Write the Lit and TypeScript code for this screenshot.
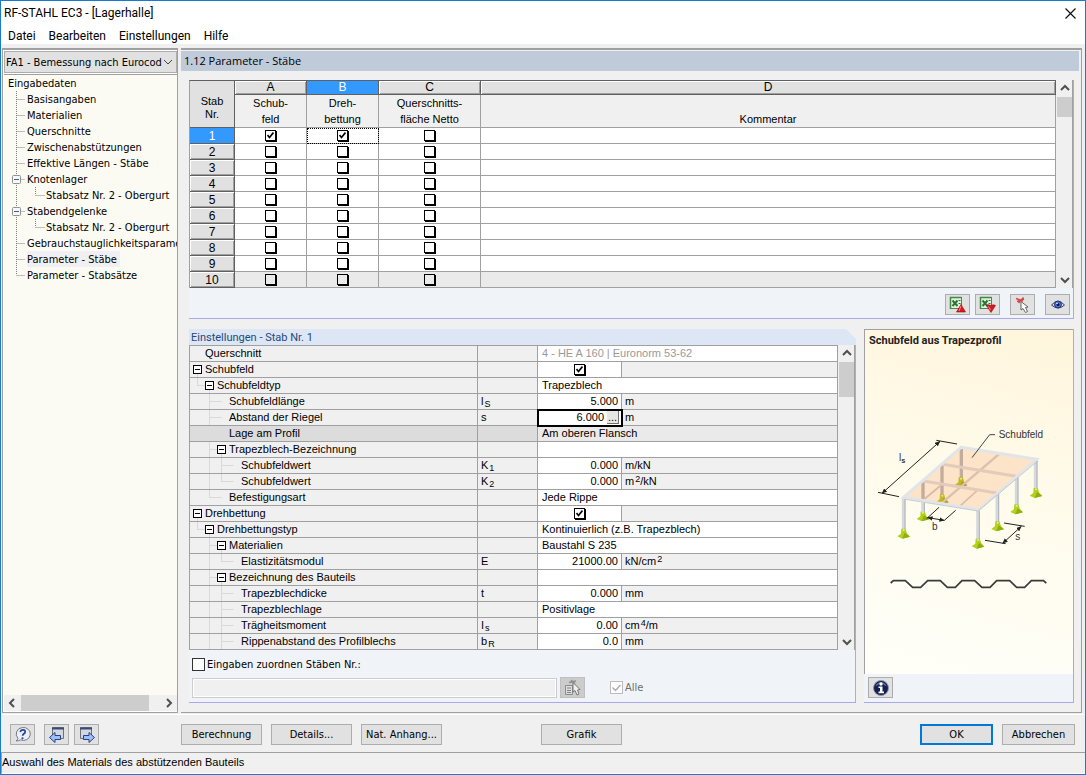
import { LitElement, html, svg, css, nothing, TemplateResult } from "lit";
import { customElement, state } from "lit/decorators.js";
import { classMap } from "lit/directives/class-map.js";

interface TreeItem {
  label: string;
  depth: number;
  open?: boolean;
  last?: boolean;
  selected?: boolean;
}

interface SettingRow {
  label: string;
  level: number;
  open?: boolean;
  last?: boolean;
  through?: boolean;
  symbol?: string;
  sub?: string;
  kind: "text" | "check" | "number" | "edit";
  value?: string;
  unit?: [string, string?, string?];
  muted?: boolean;
  selected?: boolean;
}

const TREE: TreeItem[] = [
  { label: "Eingabedaten", depth: 0 },
  { label: "Basisangaben", depth: 1 },
  { label: "Materialien", depth: 1 },
  { label: "Querschnitte", depth: 1 },
  { label: "Zwischenabstützungen", depth: 1 },
  { label: "Effektive Längen - Stäbe", depth: 1 },
  { label: "Knotenlager", depth: 1, open: true },
  { label: "Stabsatz Nr. 2 - Obergurt", depth: 2, last: true },
  { label: "Stabendgelenke", depth: 1, open: true },
  { label: "Stabsatz Nr. 2 - Obergurt", depth: 2, last: true },
  { label: "Gebrauchstauglichkeitsparameter", depth: 1 },
  { label: "Parameter - Stäbe", depth: 1, selected: true },
  { label: "Parameter - Stabsätze", depth: 1, last: true },
];

const SETTINGS: SettingRow[] = [
  { label: "Querschnitt", level: 0, kind: "text", value: "4 - HE A 160 | Euronorm 53-62", muted: true },
  { label: "Schubfeld", level: 0, open: true, kind: "check" },
  { label: "Schubfeldtyp", level: 1, open: true, last: true, kind: "text", value: "Trapezblech" },
  { label: "Schubfeldlänge", level: 2, symbol: "l", sub: "S", kind: "number", value: "5.000", unit: ["m"] },
  { label: "Abstand der Riegel", level: 2, symbol: "s", kind: "edit", value: "6.000", unit: ["m"] },
  { label: "Lage am Profil", level: 2, kind: "text", value: "Am oberen Flansch", selected: true },
  { label: "Trapezblech-Bezeichnung", level: 2, open: true, kind: "text", value: "" },
  { label: "Schubfeldwert", level: 3, through: true, symbol: "K", sub: "1", kind: "number", value: "0.000", unit: ["m/kN"] },
  { label: "Schubfeldwert", level: 3, through: true, last: true, symbol: "K", sub: "2", kind: "number", value: "0.000", unit: ["m", "2", "/kN"] },
  { label: "Befestigungsart", level: 2, last: true, kind: "text", value: "Jede Rippe" },
  { label: "Drehbettung", level: 0, open: true, kind: "check" },
  { label: "Drehbettungstyp", level: 1, open: true, last: true, kind: "text", value: "Kontinuierlich (z.B. Trapezblech)" },
  { label: "Materialien", level: 2, open: true, kind: "text", value: "Baustahl S 235" },
  { label: "Elastizitätsmodul", level: 3, through: true, last: true, symbol: "E", kind: "number", value: "21000.00", unit: ["kN/cm", "2"] },
  { label: "Bezeichnung des Bauteils", level: 2, open: true, kind: "text", value: "" },
  { label: "Trapezblechdicke", level: 3, through: true, symbol: "t", kind: "number", value: "0.000", unit: ["mm"] },
  { label: "Trapezblechlage", level: 3, through: true, kind: "text", value: "Positivlage" },
  { label: "Trägheitsmoment", level: 3, through: true, symbol: "I", sub: "s", kind: "number", value: "0.00", unit: ["cm", "4", "/m"] },
  { label: "Rippenabstand des Profilblechs", level: 3, through: true, symbol: "b", sub: "R", kind: "number", value: "0.0", unit: ["mm"] },
];

const chevron = (dir: "up" | "down" | "left" | "right") => {
  const d = { up: "M1 6 5 2 9 6", down: "M1 3 5 7 9 3", left: "M7 1 3 5 7 9", right: "M3 1 7 5 3 9" }[dir];
  return html`<svg width="10" height="10" viewBox="0 0 10 10" aria-hidden="true"><path d=${d} fill="none" stroke="#505050" stroke-width="2"/></svg>`;
};

const tick = html`<svg class="tick" width="7" height="7" viewBox="0 0 7 7" aria-hidden="true"><path d="M0.500 3 2.500 5.500 6.500 0.500" fill="none" stroke="#000" stroke-width="1.700"/></svg>`;

const excel = (up: boolean) => html`<svg width="18" height="18" viewBox="0 0 18 18" aria-hidden="true">
  <rect x="1.500" y="1.500" width="11" height="11" fill="#e4f0e2" stroke="#5d7d60"/>
  <path d="M1.500 13V1.500h11" fill="none" stroke="#3f8a44" stroke-width="1.500"/>
  <path d="M3.500 4.500 8.500 10M8.500 4.500 3.500 10" stroke="#2b7431" stroke-width="2"/>
  <path d="M9.500 4.500h2M9.500 7.500h2" stroke="#2b7431"/>
  ${up
    ? svg`<path d="M12 8.500 16.500 16H7.500z" fill="#d8191f" stroke="#8e0b10" stroke-width=".6"/><path d="M12 10 10 15" stroke="#ff8c86"/>`
    : svg`<path d="M7.500 9.500q2-1.500 4.500 0 2.500-1.500 4.500 0L12 16.500z" fill="#d8191f" stroke="#8e0b10" stroke-width=".6"/><path d="M9.500 10.500 11.500 14" stroke="#ff8c86"/>`}
</svg>`;

const pickIcon = html`<svg width="18" height="18" viewBox="0 0 18 18" aria-hidden="true">
  <path d="M2 2.500 9 5M9.500 1.500 4.500 7M3 5.500 10 3" stroke="#d9464a" stroke-width="1.500"/>
  <path d="M7 5.500V14L9 12.500 11.500 16.500 13.500 15.500 11.500 11.500 14 11z" fill="#fff" stroke="#555" stroke-width=".9"/>
</svg>`;

const eyeIcon = html`<svg width="18" height="18" viewBox="0 0 18 18" aria-hidden="true">
  <path d="M2.500 9Q9 1.500 15.500 9 9 15 2.500 9z" fill="#dfe6fb" stroke="#3b3f4a"/>
  <circle cx="9" cy="8.500" r="3.500" fill="#4f74d9" stroke="#1c2c78"/>
  <circle cx="9" cy="8.500" r="1.500" fill="#0a1236"/><circle cx="8" cy="7.500" r=".8" fill="#fff"/>
</svg>`;

const pickGrey = html`<svg width="18" height="18" viewBox="0 0 18 18" aria-hidden="true">
  <path d="M1.500 6.500h7v9h-7z" fill="#dedede" stroke="#8a8a8a"/>
  <path d="M3 9h4M3 11.500h4M3 13.500h4" stroke="#808080"/>
  <path d="M5 3.500 12 2M7 1 11 5" stroke="#8e8e8e" stroke-width="1.500"/>
  <path d="M9 3.500V13L11 11.500 13 16 15 15 13.500 11 16 10.500z" fill="#efefef" stroke="#777"/>
</svg>`;

const helpIcon = html`<svg width="18" height="18" viewBox="0 0 18 18" aria-hidden="true">
  <path d="M8.500 1.500a7 6.500 0 1 1-2 12.400q-1.500 1-4.500 1 1.800-1 2-2.500A6.700 6.500 0 0 1 8.500 1.500z" fill="#eceff4" stroke="#75797f"/>
  <path d="M6.300 6q.4-2.300 2.700-2.200 2.500.2 2.100 2.200-.2 1.200-1.500 2-.9.600-.9 1.800" fill="none" stroke="#27489c" stroke-width="1.800"/>
  <circle cx="8.500" cy="12.300" r="1.100" fill="#27489c"/>
</svg>`;

const windowArrow = (right: boolean) => html`<svg width="18" height="18" viewBox="0 0 18 18" aria-hidden="true">
  <path d=${right ? "M2.500 1.500h11v11h-11z" : "M4.500 1.500h11v11h-11z"} fill="#d3d7de" stroke="#6d7078"/>
  <path d=${right ? "M2 2.500h12" : "M4 2.500h12"} stroke="#3a4a78" stroke-width="2"/>
  <path d=${right ? "M5.500 9.500H11V6.500L16.500 11.500 11 16.500V13.500H5.500z" : "M12.500 9.500H7V6.500L1.500 11.500 7 16.500V13.500H12.500z"} fill="#9dc0f4" stroke="#23408f"/>
</svg>`;

const infoIcon = html`<svg width="18" height="18" viewBox="0 0 18 18" aria-hidden="true">
  <circle cx="9" cy="9" r="7.500" fill="#16204e" stroke="#8f96ad"/>
  <path d="M4 6.500Q9 1 14 6.500" fill="none" stroke="#5c6ba3" stroke-width="1.500"/>
  <circle cx="9" cy="5" r="1.700" fill="#fff"/><path d="M6.500 7.500h4v5h1.500v1.700H6.500v-1.700H8V9H6.500z" fill="#fff"/>
</svg>`;

const foot = (x: number, y: number, back = false) => svg`<g transform="translate(${x} ${y})">
  <path d="M-7-16H5L10-2 19 8-4 14-19 7-8-1z" fill=${back ? "#c3b821" : "#b3cf1f"}/>
  <path d="M3-4 19 8-4 14z" fill=${back ? "#a99b1c" : "#8fae12"}/><circle cx="0" cy="-12" r="3" fill="#e4f08e"/></g>`;
const post = (x: number, y1: number, y2: number) => svg`<path d="M${x} ${y1}V${y2}" stroke="#d5d8dc" stroke-width="11"/><path d="M${x + 4} ${y1}V${y2}" stroke="#adb2b8" stroke-width="3"/>`;
const backPost = (x: number, y1: number, y2: number) => svg`<path d="M${x} ${y1}V${y2}" stroke="#c3ab9d" stroke-width="10"/>`;

const sketch = html`<svg class="sketch" width="208" height="200" viewBox="15 0 624 600" role="img" aria-label="Schubfeld">
  <defs><marker id="tip" viewBox="0 0 14 12" refX="13" refY="6" markerWidth="16" markerHeight="14" markerUnits="userSpaceOnUse" orient="auto-start-reverse"><path d="M0 0 14 6 0 12z" fill="#222"/></marker></defs>
  ${foot(189, 320)}
  <path d="M303 112 530 148 356 299 131 262z" fill="#fde3c8"/>
  ${post(189, 278, 306)}${backPost(189, 215, 270)}${backPost(304, 116, 206)}${backPost(246, 165, 258)}
  ${foot(303, 218, true)}${foot(247, 269, true)}
  <path d="M416 133 244 280" stroke="#dcc0ae" stroke-width="7" fill="none"/>
  <path d="M248 163 469 199M190 213 411 249" stroke="#e3cbbb" stroke-width="9" fill="none"/>
  <path d="M240 228 190 270M350 243 300 288" stroke="#d8baa7" stroke-width="5" fill="none"/>
  ${post(527, 152, 240)}${post(470, 202, 288)}${post(412, 250, 340)}${post(354, 300, 392)}${post(131, 264, 362)}
  <path d="M303 112 530 148 356 299 131 262z" fill="none" stroke="#e2e5e8" stroke-width="9"/>
  <path d="M136 268 354 303 534 152" fill="none" stroke="#b5babf" stroke-width="2"/>
  ${foot(528, 250)}${foot(470, 299)}${foot(413, 350)}${foot(354, 402)}${foot(131, 372)}
  <g stroke="#222" stroke-width="3" fill="none">
    <path d="M229 91 291 102M54 247 117 260M432 339 494 349M375 391 437 401"/>
    <path d="M66 250 240 94" marker-start="url(#tip)" marker-end="url(#tip)"/>
    <path d="M428 400 484 349" marker-start="url(#tip)" marker-end="url(#tip)"/>
    <path d="M203 323 253 331" marker-start="url(#tip)" marker-end="url(#tip)"/>
    <path d="M200 326 237 292M253 331 287 301"/>
  </g>
  <path d="M336 143 389 74H405" fill="none" stroke="#444" stroke-width="3"/>
  <path d="M92 519 100 512H136L158 532H182L203 512H241L262 532H286L306 512H344L366 532H390L410 512H449L470 532H494L514 512H550L559 519" fill="none" stroke="#3a3a3a" stroke-width="5"/>
  <g><text x="416" y="84">Schubfeld</text><text x="117" y="154">l<tspan class="small" dy="5">s</tspan></text><text x="216" y="360">b</text><text x="466" y="391">s</text></g>
</svg>`;

@customElement("app-root")
export class AppRoot extends LitElement {
  static styles = css`
    :host { display: block; height: 100vh; color: #000; --line: #a0a0a0; --face: #f0f0f0; --ui: "DejaVu Sans Condensed", "DejaVu Sans", sans-serif; --grid: "Liberation Sans", sans-serif; --title: Roboto, sans-serif; font: 11px/16px var(--ui); }
    * { box-sizing: border-box; }
    .window { height: 100%; display: flex; flex-direction: column; border: 1px solid #1979ca; background: var(--face); overflow: hidden; }
    .titlebar { display: flex; align-items: center; justify-content: space-between; height: 24px; padding: 0 8px 0 3px; background: #fff; font: 12px/16px var(--title); flex: none; }
    .close { border: 0; background: none; padding: 0; display: flex; }
    .menu { display: flex; gap: 13px; height: 19px; padding: 3px 7px 0; background: #fff; font: 12px/16px var(--title); flex: none; }
    .menu a { color: inherit; text-decoration: none; }
    .body { flex: 1; min-height: 0; display: flex; gap: 3px; padding: 4px 3px 0 1px; }
    .sidebar { flex: 0 0 176px; display: flex; flex-direction: column; border: 1px solid var(--line); border-top-width: 2px; padding: 1px 0 1px 1px; background: #fff; margin-bottom: 1px; min-width: 0; }
    .case { appearance: none; width: 173px; height: 22px; border: 1px solid #adadad; border-radius: 0; padding: 1px 14px 0 1px; margin: 0; font: 11px/16px var(--ui); color: #000; background: #e1e1e1 url("data:image/svg+xml,%3Csvg xmlns='http://www.w3.org/2000/svg' width='10' height='6'%3E%3Cpath d='M1 1l4 4 4-4' fill='none' stroke='%23444'/%3E%3C/svg%3E") no-repeat right 3px center; }
    .tree { flex: 1; min-height: 0; margin: 1px 0 0; padding: 0; list-style: none; border-top: 1px solid var(--line); background: #fcfbf3; overflow: hidden; }
    .tree li { display: flex; height: 16px; white-space: nowrap; line-height: 18px; }
    .tree svg { flex: none; }
    .tree .root { padding-left: 4px; }
    .tree .picked { background: #f0f0f4; padding-right: 3px; }
    .hscroll { display: flex; align-items: center; justify-content: space-between; height: 16px; padding: 0 3px; background: var(--face); gap: 4px; }
    .hscroll .thumb { width: 128px; height: 16px; background: #cdcdcd; margin-right: auto; }
    .main { flex: 1; min-width: 0; display: flex; flex-direction: column; border: 1px solid var(--line); border-left: 0; border-top-width: 2px; padding-top: 1px; margin-bottom: 1px; }
    .heading { height: 20px; margin: 0 2px 9px 0; padding: 2px 3px; background: #bfcbd9; font: 11px/16px "Open Sans", sans-serif; flex: none; }
    .content { flex: 1; min-height: 0; display: flex; flex-direction: column; gap: 10px; padding: 0 7px 9px 8px; }
    .panel { background: #f0f4f9; border-right: 1px solid #a9a9ea; border-bottom: 1px solid #a9a9ea; }
    .scrollarea { display: flex; background: var(--face); border-right: 1px solid var(--line); }
    .grid { flex: 1; min-width: 0; }
    .vscroll { flex: none; width: 16px; display: flex; flex-direction: column; align-items: center; padding: 4px 0 3px 1px; gap: 3px; background: var(--face); }
    .vscroll .thumb { width: 15px; height: 20px; background: #cdcdcd; margin-bottom: auto; }
    .vscroll .tall { height: 35px; }
    table { width: 100%; table-layout: fixed; border-collapse: separate; border-spacing: 0; font: 12px/15px var(--grid); border-left: 1px solid var(--line); border-top: 1px solid var(--line); }
    th, td { padding: 0; font-weight: 400; border-right: 1px solid var(--line); border-bottom: 1px solid var(--line); overflow: hidden; white-space: nowrap; }
    .members { text-align: center; border-top-color: #606060; font-size: 11px; line-height: 16px; }
    .members td { height: 16px; background: #fff; line-height: 0; }
    .members .letter { height: 14px; line-height: 13px; font-size: 12px; background: #e1e1e1; border-color: #606060; box-shadow: inset 1px 1px #fff, inset -1px -1px var(--line); }
    .members .caption { height: 33px; background: var(--face); vertical-align: bottom; }
    .members .corner { background: #e1e1e1; line-height: 13px; border-color: #606060; padding-top: 8px; }
    .members .num { height: 16px; line-height: 14px; font-size: 12px; background: #e1e1e1; border-color: #606060; box-shadow: inset 1px 1px #fff, inset -1px -1px var(--line); }
    .members .hot { background: #3399ff; color: #fff; box-shadow: none; }
    .members .end td { background: #eaeaea; }
    .members .focus { outline: 1px dotted #000; outline-offset: -1px; }
    .w-num { width: 45px; } .w-col { width: 72px; } .w-net { width: 102px; }
    .box { display: inline-grid; place-items: center; width: 12px; height: 12px; vertical-align: middle; }
    .box > * { grid-area: 1 / 1; }
    .box input { appearance: none; margin: 0; width: 11px; height: 11px; border: 1px solid #000; background: #fff; box-shadow: 1px 1px #000; }
    .end .box input { background: #eaeaea; }
    .box .tick { pointer-events: none; z-index: 1; }
    .tools { display: flex; justify-content: flex-end; padding: 6px 3px 3px; height: 30px; }
    .icon { display: inline-flex; align-items: center; justify-content: center; width: 25px; height: 21px; padding: 0; border: 1px solid #adadad; background: #e1e1e1; flex: none; }
    .tools .icon + .icon { margin-left: 5px; }
    .tools .icon + .icon.apart { margin-left: 10px; }
    .lower { flex: 1; min-height: 0; display: flex; gap: 8px; }
    .settings { flex: 1; min-width: 0; display: flex; flex-direction: column; }
    .settings h2 { margin: 0; height: 16px; padding: 0 2px; background: #dce6f4; color: #1f497d; font: 11px/17px var(--title); clip-path: polygon(0 0, calc(100% - 10px) 0, 100% 10px, 100% 100%, 0 100%); }
    .fill { flex: 1; display: flex; flex-direction: column; }
    .props { font-size: 11px; text-align: left; }
    .props th, .props td { height: 16px; background: var(--face); }
    .name { display: flex; height: 15px; line-height: 15px; }
    .props .sym { padding-left: 3px; }
    .sub { font-size: 9px; margin-left: 1px; position: relative; top: 2px; line-height: 0; }
    .sup { font-size: 9px; margin-left: 1px; position: relative; top: -3px; line-height: 0; }
    .props .wide { background: #fff; padding-left: 4px; }
    .props .muted { color: #999; }
    .props .amount { background: #fff; text-align: right; padding-right: 3px; }
    .props .centre { background: #fff; text-align: center; line-height: 0; }
    .props .unit { padding-left: 3px; }
    .props .chosen th, .props .chosen .sym { background: #dcdcdc; }
    .props .chosen .wide { background: #eaeaea; }
    .props .editing { background: #fff; outline: 2px solid #000; outline-offset: -1px; }
    .editor { display: flex; height: 15px; padding: 1px 2px; }
    .editor input { flex: 1; min-width: 0; border: 0; padding: 0 3px 0 0; background: none; text-align: right; font: 11px/13px var(--grid); height: 13px; outline: 0; }
    .editor button { width: 12px; height: 13px; border: 0; border-right: 1px solid #707070; border-bottom: 1px solid #707070; background: #e6e6e6; padding: 0; font: 11px/9px var(--grid); }
    .p-name { width: 288px; } .p-sym { width: 60px; } .p-val { width: 84px; }
    .assign { padding: 8px 3px 4px 3px; display: flex; flex-direction: column; gap: 6px; }
    .check { display: flex; align-items: center; gap: 2px; height: 13px; }
    .check input { appearance: none; width: 13px; height: 13px; margin: 0; border: 1px solid #333; background: #fff; }
    .check.off { color: #6d6d6d; margin-left: 25px; }
    .check .box { width: 13px; height: 13px; }
    .check .box input { width: 13px; height: 13px; border-color: #bcbcbc; box-shadow: none; background: #fff; }
    .line { display: flex; align-items: center; }
    .list { width: 365px; height: 20px; border: 1px solid #ccc; background: var(--face); box-shadow: inset 0 0 0 1px #fff; margin: 0 3px 0 0; padding: 2px; }
    .icon.off { background: #ccc; border-color: #bfbfbf; }
    .preview { flex: 0 0 210px; display: flex; flex-direction: column; }
    .picture { flex: 1; min-height: 0; overflow: hidden; border-left: 1px solid var(--line); border-top: 1px solid var(--line); background: linear-gradient(195deg, #fff5dc, #fffdf0 60%, #fffef8); }
    .picture h2 { margin: 3px 0 61px; padding: 0 4px; font: bold 11px/16px var(--title); color: #222; }
    .sketch { display: block; }
    .sketch text { font: 30px "Liberation Sans", sans-serif; fill: #333; }
    .sketch .small { font-size: 22px; font-weight: bold; }
    .info { height: 28px; padding: 3px 4px; flex: none; }
    .footer { display: flex; height: 37px; padding: 9px 10px 0 9px; flex: none; }
    .footer .icon { margin-right: 9px; }
    .footer .icon + .icon { margin-right: 5px; }
    .btn { width: 81px; height: 21px; border: 1px solid #adadad; background: #e1e1e1; padding: 1px 0 0; font: 11px/16px var(--ui); color: #000; margin-right: 9px; white-space: nowrap; }
    .push { margin-left: 77px; }
    .graphic { margin-left: 90px; margin-right: auto; }
    .small-btn { width: 73px; }
    .default { border: 2px solid #0078d7; }
    .cancel { margin-right: 0; }
    .rule { height: 1px; background: #fff; flex: none; }
    .status { height: 22px; border-top: 1px solid var(--line); border-left: 1px solid var(--line); border-bottom: 1px solid #fff; padding: 1px 0 0; font: 11px/16px var(--grid); flex: none; }
  `;

  @state() private members = Array.from({ length: 10 }, (_, i) => ({ nr: i + 1, shear: i === 0, twist: i === 0, net: false }));

  private box(checked: boolean, label: string, onChange?: () => void) {
    return html`<span class="box"><input type="checkbox" aria-label=${label} .checked=${checked} @change=${onChange ?? nothing}>${checked ? tick : nothing}</span>`;
  }

  private toggle(index: number, key: "shear" | "twist" | "net") {
    this.members = this.members.map((m, i) => (i === index ? { ...m, [key]: !m[key] } : m));
  }

  private treeRow(item: TreeItem): TemplateResult {
    if (item.depth === 0) return html`<li><span class="root">${item.label}</span></li>`;
    const width = item.depth === 1 ? 23 : 42;
    return html`<li>
      <svg width=${width} height="16" viewBox="0 0 ${width} 16" aria-hidden="true">
        <path d=${item.depth === 2 ? "M12.500 0V16M31.500 0V8M31.500 8.500H41" : item.last ? "M12.500 0V8M12.500 8.500H21" : "M12.500 0V16M12.500 8.500H21"} fill="none" stroke="#808080" stroke-dasharray="1 1"/>
        ${item.open ? svg`<rect x="8.500" y="4.500" width="8" height="8" rx="1" fill="#f8f8f8" stroke="#919191"/><path d="M10 8.500h5" stroke="#3a5fa8"/>` : nothing}
      </svg>
      <span class=${item.selected ? "picked" : ""}>${item.label}</span>
    </li>`;
  }

  private guides(r: SettingRow) {
    const width = 15 + 12 * r.level;
    const own = 7.5 + 12 * r.level;
    const parent = own - 12;
    let d = "";
    if (r.level > 0 && !r.selected) {
      d += `M${parent} 0V${r.last ? 8 : 15}M${parent} 7.5H${r.open ? own - 4 : own}`;
      if (r.through) d += `M${parent - 12} 0V15`;
    }
    if (r.open) d += `M${own} 12V15`;
    return html`<svg width=${width} height="15" viewBox="0 0 ${width} 15" aria-hidden="true">
      <path d=${d} fill="none" stroke="#d9d9d9"/>
      ${r.open ? svg`<rect x=${own - 4} y="3.500" width="8" height="8" fill="#fff" stroke="#000"/><path d="M${own - 2.5} 7.500h5" stroke="#000"/>` : nothing}
    </svg>`;
  }

  private settingRow(r: SettingRow): TemplateResult {
    const unit = r.unit ?? [""];
    return html`<tr class=${classMap({ chosen: !!r.selected })}>
      <th scope="row"><div class="name">${this.guides(r)}<span>${r.label}</span></div></th>
      <td class="sym">${r.symbol}${r.sub ? html`<span class="sub">${r.sub}</span>` : nothing}</td>
      ${r.kind === "text"
        ? html`<td class=${classMap({ wide: true, muted: !!r.muted })} colspan="2">${r.value}</td>`
        : html`${r.kind === "check"
            ? html`<td class="centre">${this.box(true, r.label)}</td>`
            : r.kind === "edit"
              ? html`<td class="editing"><div class="editor"><input type="text" aria-label=${r.label} .value=${r.value ?? ""}><button aria-label="Auswählen">...</button></div></td>`
              : html`<td class="amount">${r.value}</td>`}
          <td class="unit">${unit[0]}${unit[1] ? html`<span class="sup">${unit[1]}</span>` : nothing}${unit[2] ?? ""}</td>`}
    </tr>`;
  }

  render() {
    return html`<div class="window">
      <header class="titlebar"><span>RF-STAHL EC3 - [Lagerhalle]</span>
        <button class="close" aria-label="Schließen"><svg width="13" height="13" viewBox="0 0 13 13"><path d="M1.500 1.500l10 10M11.500 1.500l-10 10" stroke="#111" stroke-width="1.200"/></svg></button>
      </header>
      <nav class="menu"><a href="#datei">Datei</a><a href="#bearbeiten">Bearbeiten</a><a href="#einstellungen">Einstellungen</a><a href="#hilfe">Hilfe</a></nav>
      <div class="body">
        <aside class="sidebar">
          <select class="case" aria-label="Bemessungsfall"><option>FA1 - Bemessung nach Eurocod</option></select>
          <ul class="tree">${TREE.map((t) => this.treeRow(t))}</ul>
          <div class="hscroll">${chevron("left")}<div class="thumb"></div>${chevron("right")}</div>
        </aside>
        <main class="main">
          <h1 class="heading">1.12 Parameter - Stäbe</h1>
          <div class="content">
            <section class="panel">
              <div class="scrollarea">
                <div class="grid"><table class="members">
                  <colgroup><col class="w-num"><col class="w-col"><col class="w-col"><col class="w-net"><col></colgroup>
                  <thead>
                    <tr><th class="corner" rowspan="2">Stab<br>Nr.</th><th class="letter">A</th><th class="letter hot">B</th><th class="letter">C</th><th class="letter">D</th></tr>
                    <tr><th class="caption">Schub-<br>feld</th><th class="caption">Dreh-<br>bettung</th><th class="caption">Querschnitts-<br>fläche Netto</th><th class="caption">Kommentar</th></tr>
                  </thead>
                  <tbody>${this.members.map((m, i) => html`<tr class=${i === 9 ? "end" : ""}>
                    <th scope="row" class=${i === 0 ? "num hot" : "num"}>${m.nr}</th>
                    <td>${this.box(m.shear, `Schubfeld ${m.nr}`, () => this.toggle(i, "shear"))}</td>
                    <td class=${i === 0 ? "focus" : ""}>${this.box(m.twist, `Drehbettung ${m.nr}`, () => this.toggle(i, "twist"))}</td>
                    <td>${this.box(m.net, `Querschnittsfläche Netto ${m.nr}`, () => this.toggle(i, "net"))}</td>
                    <td></td>
                  </tr>`)}</tbody>
                </table></div>
                <div class="vscroll">${chevron("up")}<div class="thumb"></div>${chevron("down")}</div>
              </div>
              <div class="tools">
                <button class="icon" aria-label="Excel-Export">${excel(true)}</button>
                <button class="icon" aria-label="Excel-Import">${excel(false)}</button>
                <button class="icon apart" aria-label="Stab wählen">${pickIcon}</button>
                <button class="icon apart" aria-label="Ansicht">${eyeIcon}</button>
              </div>
            </section>
            <div class="lower">
              <section class="settings">
                <h2>Einstellungen - Stab Nr. 1</h2>
                <div class="panel fill">
                  <div class="scrollarea">
                    <div class="grid"><table class="props">
                      <colgroup><col class="p-name"><col class="p-sym"><col class="p-val"><col></colgroup>
                      <tbody>${SETTINGS.map((r) => this.settingRow(r))}</tbody>
                    </table></div>
                    <div class="vscroll">${chevron("up")}<div class="thumb tall"></div>${chevron("down")}</div>
                  </div>
                  <div class="assign">
                    <label class="check"><input type="checkbox">Eingaben zuordnen Stäben Nr.:</label>
                    <div class="line">
                      <input class="list" type="text" disabled aria-label="Stäbe Nr.">
                      <button class="icon off" disabled aria-label="Stäbe wählen">${pickGrey}</button>
                      <label class="check off"><span class="box"><input type="checkbox" checked disabled><svg class="tick" width="9" height="8" viewBox="0 0 9 8"><path d="M.5 3.500 3.500 6.500 8.500 1" fill="none" stroke="#aaa" stroke-width="1.300"/></svg></span>Alle</label>
                    </div>
                  </div>
                </div>
              </section>
              <section class="preview">
                <div class="panel fill">
                  <div class="picture"><h2>Schubfeld aus Trapezprofil</h2>${sketch}</div>
                  <div class="info"><button class="icon" aria-label="Info">${infoIcon}</button></div>
                </div>
              </section>
            </div>
          </div>
        </main>
      </div>
      <div class="rule"></div>
      <div class="footer">
        <button class="icon" aria-label="Hilfe">${helpIcon}</button>
        <button class="icon" aria-label="Vorherige Maske">${windowArrow(false)}</button>
        <button class="icon" aria-label="Nächste Maske">${windowArrow(true)}</button>
        <button class="btn push">Berechnung</button>
        <button class="btn">Details...</button>
        <button class="btn">Nat. Anhang...</button>
        <button class="btn graphic">Grafik</button>
        <button class="btn small-btn default">OK</button>
        <button class="btn small-btn cancel">Abbrechen</button>
      </div>
      <div class="status" role="status">Auswahl des Materials des abstützenden Bauteils</div>
    </div>`;
  }
}
